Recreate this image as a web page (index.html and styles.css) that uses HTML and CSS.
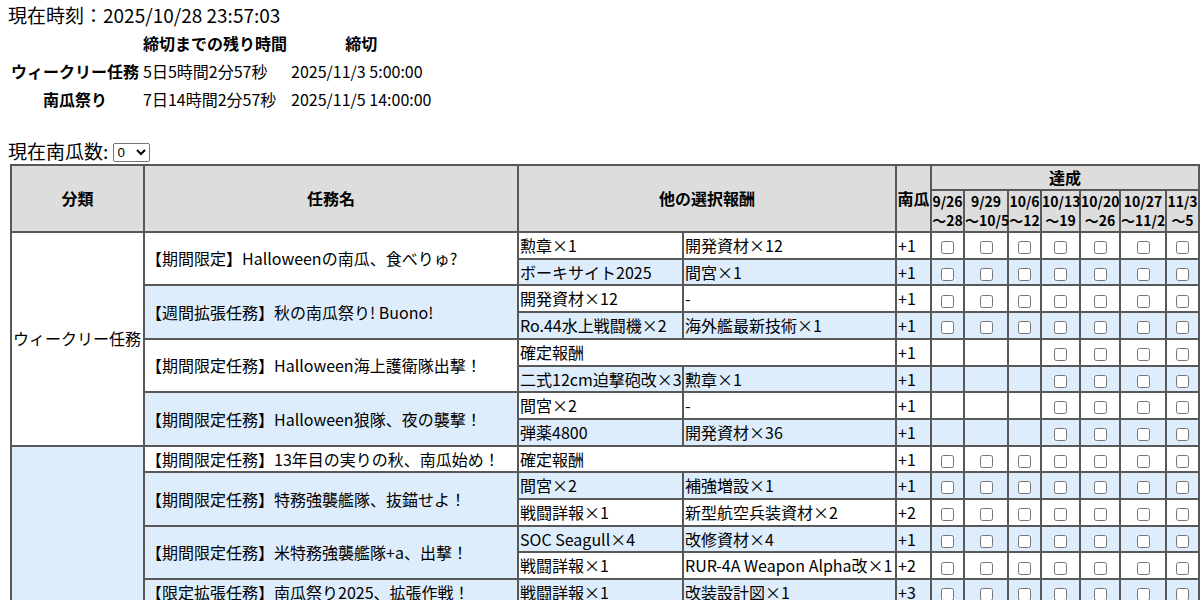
FILE: index.html
```html
<!DOCTYPE html>
<html lang="ja">
<head>
<meta charset="utf-8">
<title>南瓜祭り</title>
<link rel="stylesheet" href="styles.css">
</head>
<body>
<div class="now">現在時刻：2025/10/28 23:57:03</div>
<table class="deadline">
  <tr><th></th><th>締切までの残り時間</th><th>締切</th></tr>
  <tr><th>ウィークリー任務</th><td>5日5時間2分57秒</td><td>2025/11/3 5:00:00</td></tr>
  <tr><th>南瓜祭り</th><td>7日14時間2分57秒</td><td>2025/11/5 14:00:00</td></tr>
</table>
<div class="count">現在南瓜数: <select>
  <option>0</option><option>1</option><option>2</option><option>3</option><option>4</option><option>5</option>
  <option>6</option><option>7</option><option>8</option><option>9</option><option>10</option><option>11</option>
  <option>12</option><option>13</option><option>14</option><option>15</option><option>16</option><option>17</option>
  <option>18</option><option>19</option><option>20</option>
</select></div>
<table class="quests">
  <colgroup>
    <col class="c-cat"><col class="c-name"><col class="c-r1"><col class="c-r2"><col class="c-pk">
    <col class="c-d1"><col class="c-d2"><col class="c-d3"><col class="c-d4"><col class="c-d5"><col class="c-d6"><col class="c-d7">
  </colgroup>
  <thead>
    <tr class="h1">
      <th rowspan="2">分類</th>
      <th rowspan="2">任務名</th>
      <th rowspan="2" colspan="2">他の選択報酬</th>
      <th rowspan="2">南瓜</th>
      <th colspan="7">達成</th>
    </tr>
    <tr class="h2">
      <th>9/26<br>～28</th>
      <th>9/29<br>～10/5</th>
      <th>10/6<br>～12</th>
      <th>10/13<br>～19</th>
      <th>10/20<br>～26</th>
      <th>10/27<br>～11/2</th>
      <th>11/3<br>～5</th>
    </tr>
  </thead>
  <tbody>
    <tr>
      <td rowspan="8" class="cat w">ウィークリー任務</td>
      <td rowspan="2" class="name w">【期間限定】Halloweenの南瓜、食べりゅ?</td>
      <td>勲章×1</td><td>開発資材×12</td><td>+1</td>
      <td class="cb"><input type="checkbox"></td><td class="cb"><input type="checkbox"></td><td class="cb"><input type="checkbox"></td><td class="cb"><input type="checkbox"></td><td class="cb"><input type="checkbox"></td><td class="cb"><input type="checkbox"></td><td class="cb"><input type="checkbox"></td>
    </tr>
    <tr class="alt">
      <td>ボーキサイト2025</td><td>間宮×1</td><td>+1</td>
      <td class="cb"><input type="checkbox"></td><td class="cb"><input type="checkbox"></td><td class="cb"><input type="checkbox"></td><td class="cb"><input type="checkbox"></td><td class="cb"><input type="checkbox"></td><td class="cb"><input type="checkbox"></td><td class="cb"><input type="checkbox"></td>
    </tr>
    <tr>
      <td rowspan="2" class="name b">【週間拡張任務】秋の南瓜祭り! Buono!</td>
      <td>開発資材×12</td><td>-</td><td>+1</td>
      <td class="cb"><input type="checkbox"></td><td class="cb"><input type="checkbox"></td><td class="cb"><input type="checkbox"></td><td class="cb"><input type="checkbox"></td><td class="cb"><input type="checkbox"></td><td class="cb"><input type="checkbox"></td><td class="cb"><input type="checkbox"></td>
    </tr>
    <tr class="alt">
      <td>Ro.44水上戦闘機×2</td><td>海外艦最新技術×1</td><td>+1</td>
      <td class="cb"><input type="checkbox"></td><td class="cb"><input type="checkbox"></td><td class="cb"><input type="checkbox"></td><td class="cb"><input type="checkbox"></td><td class="cb"><input type="checkbox"></td><td class="cb"><input type="checkbox"></td><td class="cb"><input type="checkbox"></td>
    </tr>
    <tr>
      <td rowspan="2" class="name w">【期間限定任務】Halloween海上護衛隊出撃！</td>
      <td colspan="2">確定報酬</td><td>+1</td>
      <td></td><td></td><td></td>
      <td class="cb"><input type="checkbox"></td><td class="cb"><input type="checkbox"></td><td class="cb"><input type="checkbox"></td><td class="cb"><input type="checkbox"></td>
    </tr>
    <tr class="alt">
      <td>二式12cm迫撃砲改×3</td><td>勲章×1</td><td>+1</td>
      <td></td><td></td><td></td>
      <td class="cb"><input type="checkbox"></td><td class="cb"><input type="checkbox"></td><td class="cb"><input type="checkbox"></td><td class="cb"><input type="checkbox"></td>
    </tr>
    <tr>
      <td rowspan="2" class="name b">【期間限定任務】Halloween狼隊、夜の襲撃！</td>
      <td>間宮×2</td><td>-</td><td>+1</td>
      <td></td><td></td><td></td>
      <td class="cb"><input type="checkbox"></td><td class="cb"><input type="checkbox"></td><td class="cb"><input type="checkbox"></td><td class="cb"><input type="checkbox"></td>
    </tr>
    <tr class="alt">
      <td>弾薬4800</td><td>開発資材×36</td><td>+1</td>
      <td></td><td></td><td></td>
      <td class="cb"><input type="checkbox"></td><td class="cb"><input type="checkbox"></td><td class="cb"><input type="checkbox"></td><td class="cb"><input type="checkbox"></td>
    </tr>
    <tr>
      <td rowspan="14" class="cat b">南瓜祭り</td>
      <td class="name w">【期間限定任務】13年目の実りの秋、南瓜始め！</td>
      <td colspan="2">確定報酬</td><td>+1</td>
      <td class="cb"><input type="checkbox"></td><td class="cb"><input type="checkbox"></td><td class="cb"><input type="checkbox"></td><td class="cb"><input type="checkbox"></td><td class="cb"><input type="checkbox"></td><td class="cb"><input type="checkbox"></td><td class="cb"><input type="checkbox"></td>
    </tr>
    <tr class="alt">
      <td rowspan="2" class="name b">【期間限定任務】特務強襲艦隊、抜錨せよ！</td>
      <td>間宮×2</td><td>補強増設×1</td><td>+1</td>
      <td class="cb"><input type="checkbox"></td><td class="cb"><input type="checkbox"></td><td class="cb"><input type="checkbox"></td><td class="cb"><input type="checkbox"></td><td class="cb"><input type="checkbox"></td><td class="cb"><input type="checkbox"></td><td class="cb"><input type="checkbox"></td>
    </tr>
    <tr>
      <td>戦闘詳報×1</td><td>新型航空兵装資材×2</td><td>+2</td>
      <td class="cb"><input type="checkbox"></td><td class="cb"><input type="checkbox"></td><td class="cb"><input type="checkbox"></td><td class="cb"><input type="checkbox"></td><td class="cb"><input type="checkbox"></td><td class="cb"><input type="checkbox"></td><td class="cb"><input type="checkbox"></td>
    </tr>
    <tr class="alt">
      <td rowspan="2" class="name w">【期間限定任務】米特務強襲艦隊+a、出撃！</td>
      <td>SOC Seagull×4</td><td>改修資材×4</td><td>+1</td>
      <td class="cb"><input type="checkbox"></td><td class="cb"><input type="checkbox"></td><td class="cb"><input type="checkbox"></td><td class="cb"><input type="checkbox"></td><td class="cb"><input type="checkbox"></td><td class="cb"><input type="checkbox"></td><td class="cb"><input type="checkbox"></td>
    </tr>
    <tr>
      <td>戦闘詳報×1</td><td>RUR-4A Weapon Alpha改×1</td><td>+2</td>
      <td class="cb"><input type="checkbox"></td><td class="cb"><input type="checkbox"></td><td class="cb"><input type="checkbox"></td><td class="cb"><input type="checkbox"></td><td class="cb"><input type="checkbox"></td><td class="cb"><input type="checkbox"></td><td class="cb"><input type="checkbox"></td>
    </tr>
    <tr class="alt">
      <td class="name b">【限定拡張任務】南瓜祭り2025、拡張作戦！</td>
      <td>戦闘詳報×1</td><td>改装設計図×1</td><td>+3</td>
      <td class="cb"><input type="checkbox"></td><td class="cb"><input type="checkbox"></td><td class="cb"><input type="checkbox"></td><td class="cb"><input type="checkbox"></td><td class="cb"><input type="checkbox"></td><td class="cb"><input type="checkbox"></td><td class="cb"><input type="checkbox"></td>
    </tr>
    <tr>
      <td rowspan="2" class="name w">【期間限定任務】南瓜祭り、秋の大収穫！</td>
      <td>改修資材×3</td><td>開発資材×10</td><td>+1</td>
      <td class="cb"><input type="checkbox"></td><td class="cb"><input type="checkbox"></td><td class="cb"><input type="checkbox"></td><td class="cb"><input type="checkbox"></td><td class="cb"><input type="checkbox"></td><td class="cb"><input type="checkbox"></td><td class="cb"><input type="checkbox"></td>
    </tr>
    <tr class="alt">
      <td>家具箱（大）×1</td><td>-</td><td>+1</td>
      <td class="cb"><input type="checkbox"></td><td class="cb"><input type="checkbox"></td><td class="cb"><input type="checkbox"></td><td class="cb"><input type="checkbox"></td><td class="cb"><input type="checkbox"></td><td class="cb"><input type="checkbox"></td><td class="cb"><input type="checkbox"></td>
    </tr>
    <tr>
      <td rowspan="3" class="name b">【期間限定任務】南瓜祭り、最終決戦！</td>
      <td colspan="2">確定報酬</td><td>+2</td>
      <td class="cb"><input type="checkbox"></td><td class="cb"><input type="checkbox"></td><td class="cb"><input type="checkbox"></td><td class="cb"><input type="checkbox"></td><td class="cb"><input type="checkbox"></td><td class="cb"><input type="checkbox"></td><td class="cb"><input type="checkbox"></td>
    </tr>
    <tr class="alt">
      <td>戦闘詳報×1</td><td>勲章×1</td><td>+1</td>
      <td class="cb"><input type="checkbox"></td><td class="cb"><input type="checkbox"></td><td class="cb"><input type="checkbox"></td><td class="cb"><input type="checkbox"></td><td class="cb"><input type="checkbox"></td><td class="cb"><input type="checkbox"></td><td class="cb"><input type="checkbox"></td>
    </tr>
    <tr>
      <td>改装設計図×1</td><td>-</td><td>+1</td>
      <td class="cb"><input type="checkbox"></td><td class="cb"><input type="checkbox"></td><td class="cb"><input type="checkbox"></td><td class="cb"><input type="checkbox"></td><td class="cb"><input type="checkbox"></td><td class="cb"><input type="checkbox"></td><td class="cb"><input type="checkbox"></td>
    </tr>
    <tr class="alt">
      <td rowspan="2" class="name w">【期間限定任務】秋刀魚と南瓜の祭典！</td>
      <td>高速修復材×5</td><td>-</td><td>+1</td>
      <td class="cb"><input type="checkbox"></td><td class="cb"><input type="checkbox"></td><td class="cb"><input type="checkbox"></td><td class="cb"><input type="checkbox"></td><td class="cb"><input type="checkbox"></td><td class="cb"><input type="checkbox"></td><td class="cb"><input type="checkbox"></td>
    </tr>
    <tr>
      <td>開発資材×8</td><td>間宮×1</td><td>+1</td>
      <td class="cb"><input type="checkbox"></td><td class="cb"><input type="checkbox"></td><td class="cb"><input type="checkbox"></td><td class="cb"><input type="checkbox"></td><td class="cb"><input type="checkbox"></td><td class="cb"><input type="checkbox"></td><td class="cb"><input type="checkbox"></td>
    </tr>
  </tbody>
</table>
</body>
</html>
```

FILE: styles.css
```css
html, body {
  margin: 0;
  background: #fff;
}

body {
  padding: 2px 8px 16px;
  font-family: "Noto Sans CJK JP", "Noto Sans", sans-serif;
  font-size: 16px;
  color: #000;
}

.now {
  font-size: 19px;
  line-height: 26px;
}

.deadline {
  border-spacing: 2px;
}

.deadline th,
.deadline td {
  padding: 1px;
  text-align: left;
}

.deadline th {
  text-align: center;
}

.count {
  margin-top: 24px;
  font-size: 19px;
  line-height: 26px;
}

.count select {
  vertical-align: 2px;
}

.quests {
  margin: 0 0 0 2px;
  border-collapse: collapse;
  table-layout: fixed;
  width: 1188px;
}

.c-cat { width: 133px; }
.c-name { width: 374px; }
.c-r1 { width: 165px; }
.c-r2 { width: 213px; }
.c-pk { width: 35px; }
.c-d1 { width: 33px; }
.c-d2 { width: 44px; }
.c-d3 { width: 33px; }
.c-d4 { width: 39px; }
.c-d5 { width: 40px; }
.c-d6 { width: 46px; }
.c-d7 { width: 33px; }

.quests th,
.quests td {
  border: 2px solid #585858;
  padding: 1px;
  white-space: nowrap;
}

.quests td {
  overflow: hidden;
}

.quests th {
  background: #dddddd;
  font-weight: bold;
  line-height: 19px;
  text-align: center;
  padding: 1px 0;
}

.quests .h1 th {
  height: 21px;
}

.quests .h2 th {
  font-size: 14px;
  line-height: 19px;
}

.quests td {
  line-height: 22.7px;
  text-align: left;
  vertical-align: middle;
  background: #fff;
}

.quests tr.alt td {
  background: #ddedfc;
}

.quests td.w {
  background: #fff;
}

.quests td.b {
  background: #ddedfc;
}

.quests td.cb {
  text-align: center;
}

.quests td.cb input {
  vertical-align: middle;
  margin: 0;
}
```
